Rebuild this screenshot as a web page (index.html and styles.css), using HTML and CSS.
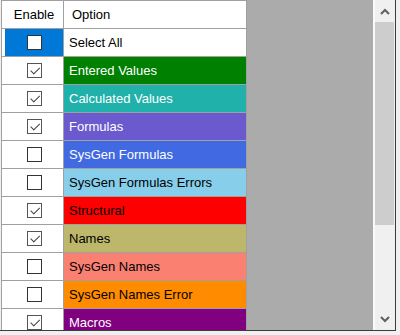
FILE: index.html
```html
<!DOCTYPE html>
<html lang="en">
<head>
    <meta charset="UTF-8">
    <title>Trace options</title>
    <link rel="stylesheet" href="styles.css">
</head>
<body>
    <div class="grid">
        <div class="viewport">
            <div class="table">
                <div class="head center">Enable</div>
                <div class="head">Option</div>

                <div class="check selected"><span class="box"></span></div>
                <div class="opt">Select All</div>

                <div class="check"><span class="box on"></span></div>
                <div class="opt light" style="background: #008000;">Entered Values</div>

                <div class="check"><span class="box on"></span></div>
                <div class="opt light" style="background: #20b2aa;">Calculated Values</div>

                <div class="check"><span class="box on"></span></div>
                <div class="opt light" style="background: #6a5acd;">Formulas</div>

                <div class="check"><span class="box"></span></div>
                <div class="opt light" style="background: #4169e1;">SysGen Formulas</div>

                <div class="check"><span class="box"></span></div>
                <div class="opt" style="background: #87ceeb;">SysGen Formulas Errors</div>

                <div class="check"><span class="box on"></span></div>
                <div class="opt" style="background: #ff0000;">Structural</div>

                <div class="check"><span class="box on"></span></div>
                <div class="opt" style="background: #bdb76b;">Names</div>

                <div class="check"><span class="box"></span></div>
                <div class="opt" style="background: #fa8072;">SysGen Names</div>

                <div class="check"><span class="box"></span></div>
                <div class="opt" style="background: #ff8c00;">SysGen Names Error</div>

                <div class="check"><span class="box on"></span></div>
                <div class="opt light" style="background: #800080;">Macros</div>
            </div>
        </div>

        <div class="scrollbar">
            <div class="arrow">
                <svg width="10" height="7" viewBox="0 0 10 7"><polyline points="1,6 5,2 9,6" fill="none" stroke="#606060" stroke-width="2"/></svg>
            </div>
            <div class="thumb"></div>
            <div class="track"></div>
            <div class="arrow">
                <svg width="10" height="7" viewBox="0 0 10 7"><polyline points="1,1 5,5 9,1" fill="none" stroke="#606060" stroke-width="2"/></svg>
            </div>
        </div>
    </div>
</body>
</html>
```

FILE: styles.css
```css
body {
    margin: 0;
    background: #f0f0f0;
    font-family: "Liberation Sans", Arial, sans-serif;
    font-size: 13px;
    color: #000;
}

.grid {
    display: flex;
    width: 396px;
    height: 331px;
    box-sizing: border-box;
    border-right: 1px solid #3c3c3c;
    border-bottom: 1px solid #3c3c3c;
    overflow: hidden;
}

.viewport {
    flex: 1;
    background: #ababab;
    overflow: hidden;
}

/* gridlines come from the table background showing through the gaps */
.table {
    display: grid;
    grid-template-columns: 61px 182px;
    grid-auto-rows: 27px;
    gap: 1px;
    width: fit-content;
    padding: 1px;
    background: #a0a0a0;
    border-left: 1px solid #f0f0f0;
}

.head,
.opt,
.check {
    display: flex;
    align-items: center;
    background: #fff;
}

.head {
    padding-left: 8px;
}

.head.center {
    justify-content: center;
    padding-left: 3px;
}

.opt {
    padding-left: 5px;
    white-space: nowrap;
    overflow: hidden;
}

.light {
    color: #fff;
}

.check {
    justify-content: center;
    border-left: 3px solid #fff;
}

.check.selected {
    background: #0078d7;
}

.box {
    width: 13px;
    height: 13px;
    border: 1px solid #333;
    background: #fff;
    position: relative;
}

.box.on {
    border-color: #555;
}

.box.on::after {
    content: "";
    position: absolute;
    left: 2px;
    top: 1px;
    width: 8px;
    height: 4px;
    border-left: 1px solid #444;
    border-bottom: 1px solid #444;
    transform: rotate(-45deg) translate(-1px, 2px);
}

.scrollbar {
    width: 22px;
    box-sizing: border-box;
    border-left: 2px solid #fafafa;
    background: #f0f0f0;
    display: flex;
    flex-direction: column;
}

.arrow {
    height: 22px;
    display: flex;
    align-items: center;
    justify-content: center;
    flex-shrink: 0;
}

.thumb {
    height: 203px;
    margin-right: 1px;
    background: #cdcdcd;
    flex-shrink: 0;
}

.track {
    flex: 1;
}
```
